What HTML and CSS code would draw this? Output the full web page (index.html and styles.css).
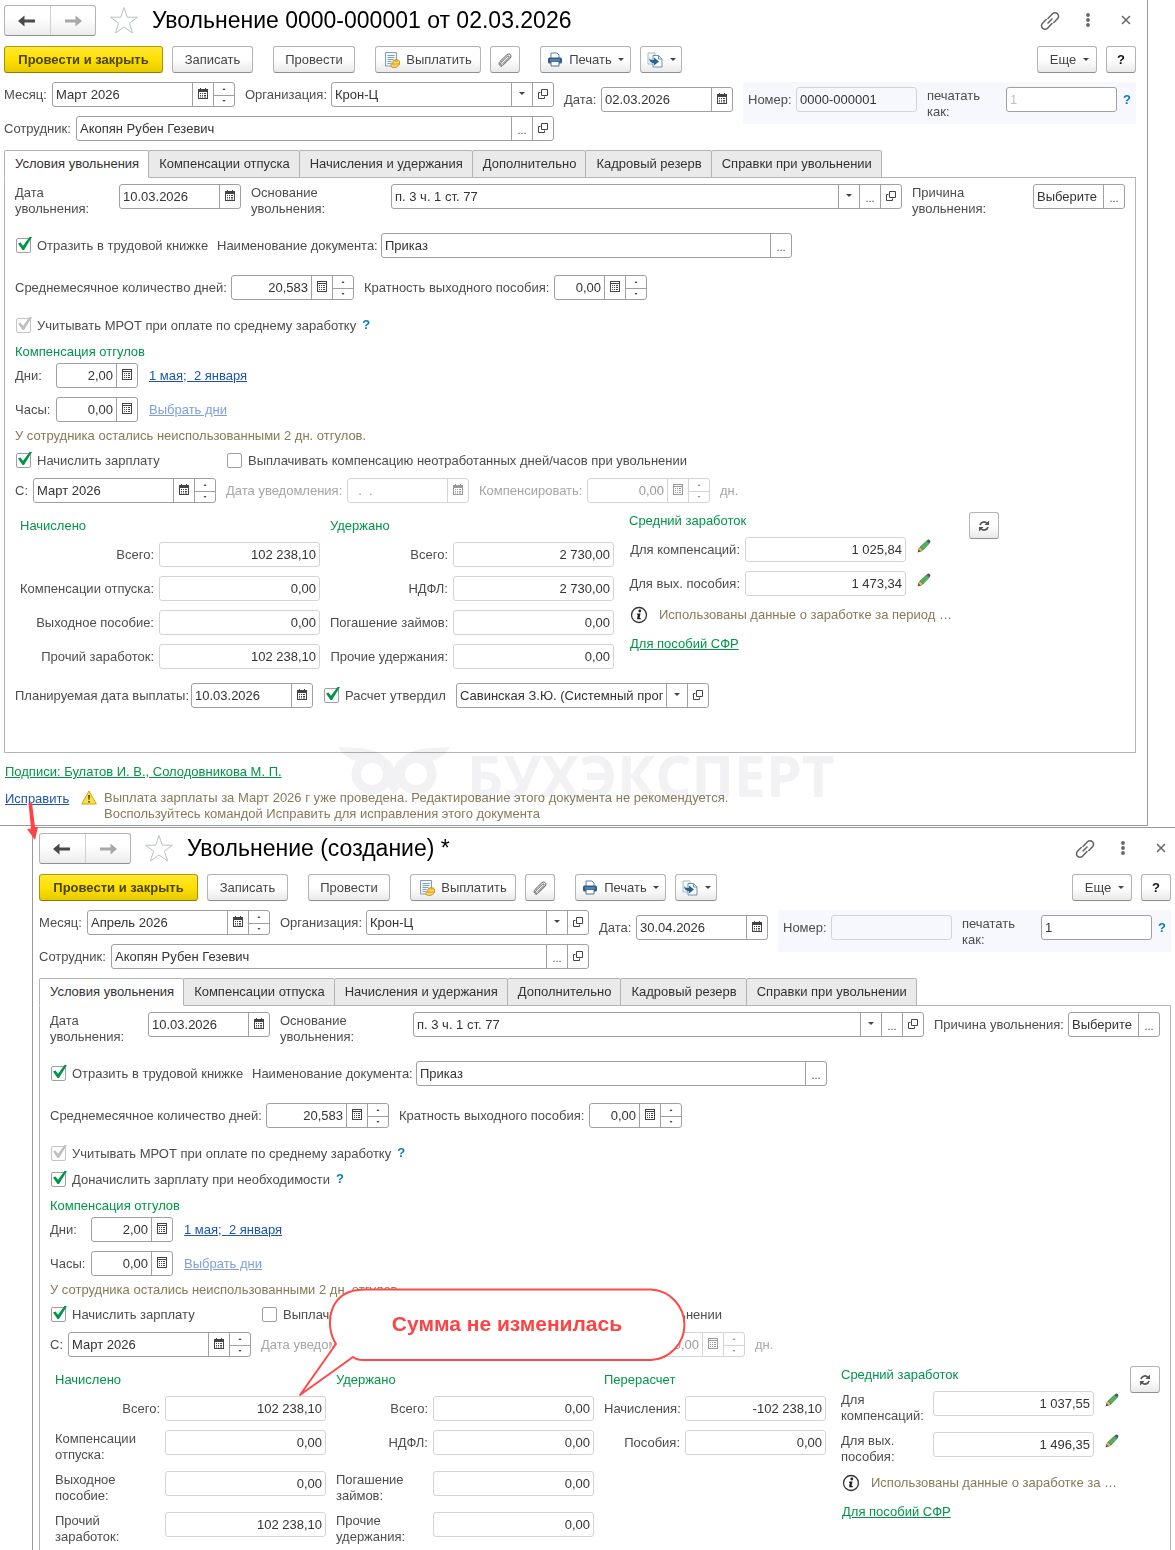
FILE: index.html
```html
<!DOCTYPE html>
<html lang="ru">
<head>
<meta charset="utf-8">
<title>Увольнение</title>
<meta name="viewport" content="width=device-width, initial-scale=1">
<link rel="stylesheet" href="styles.css">
</head>
<body>
<svg class="sprite" aria-hidden="true">
  <symbol id="i-back" viewBox="0 0 18 12"><path d="M0 6 6.500 0.500 6.500 4.500 17 4.500 17 7.500 6.500 7.500 6.500 11.500Z" fill="currentColor"/></symbol>
  <symbol id="i-forward" viewBox="0 0 18 12"><path d="M18 6 11.500 0.500 11.500 4.500 1 4.500 1 7.500 11.500 7.500 11.500 11.500Z" fill="currentColor"/></symbol>
  <symbol id="i-star" viewBox="0 0 30 29"><path d="M15 1.500 18.300 11.200 28.500 11.200 20.300 17.200 23.600 27 15 21 6.400 27 9.700 17.200 1.500 11.200 11.700 11.200Z" fill="#fff" stroke="#b9c0c6" stroke-width="1"/></symbol>
  <symbol id="i-link" viewBox="0 0 20 20"><g fill="none" stroke="#666" stroke-width="1.600" stroke-linecap="round"><path d="M8 7.500 12.500 2.800a3.500 3.500 0 0 1 5 5l-3.700 3.700"/><path d="M12 12.500 7.500 17.200a3.500 3.500 0 0 1-5-5l3.700-3.700"/><path d="M8 12 12 8"/></g></symbol>
  <symbol id="i-dots" viewBox="0 0 4 14"><g fill="#666"><circle cx="2" cy="2" r="1.900"/><circle cx="2" cy="7" r="1.900"/><circle cx="2" cy="12" r="1.900"/></g></symbol>
  <symbol id="i-close" viewBox="0 0 10 10"><path d="M1 1 9 9M9 1 1 9" stroke="#666" stroke-width="1.500"/></symbol>
  <symbol id="i-pay" viewBox="0 0 16 16"><path d="M1.500.500h11v13.500h-11z" fill="#f4f8fb" stroke="#7f9cb2"/><path d="M3.500 3.500h7M3.500 5.500h7M3.500 7.500h6M3.500 9.500h4M3.500 11.500h3" stroke="#7c9db5"/><path d="M9 9.500c0-2.400 6.500-2.400 6.500 0v2.500c0 1-1 1.500-1.500 1.500 0 2.500-7 3-7 .5v-1.500c0-1.500 1-1.700 2-1.700z" fill="#f3b52d" stroke="#b87f14" stroke-width=".7"/><path d="M9.500 10c1.500.8 4 .8 5.500 0M7.500 13.500c1.500 1 4.500.8 6-.3" fill="none" stroke="#fff0a0" stroke-width=".9"/></symbol>
  <symbol id="i-clip" viewBox="0 0 14 14"><path d="M5 10.500 10.800 4.700c.9-1.100-.4-2.300-1.400-1.400L3 9.500c-1.300 1.900.7 3.700 2.500 2.300L12.300 5c2-2.500-1-5.300-3.400-3.300L2 8.500C.2 11 1.500 13 3.500 13.300" fill="none" stroke="#555" stroke-width="1" stroke-linecap="round"/></symbol>
  <symbol id="i-print" viewBox="0 0 16 15"><path d="M4 6V1h6l2 2v3" fill="#fff" stroke="#5b82a6"/><rect x="1" y="5.500" width="14" height="6" rx="1.500" fill="#2f5f8c"/><path d="M3 8h10" stroke="#7ea6c8"/><path d="M4 9.500h8v4.500H4z" fill="#fff" stroke="#4b7196"/></symbol>
  <symbol id="i-copy" viewBox="0 0 16 16"><path d="M1 1h7v11H1z" fill="#f4f8fb" stroke="#a9b9c6"/><path d="M6 3.500h5.500L15 7v8H6z" fill="#fff" stroke="#6b90ad"/><path d="M11.500 3.500V7H15" fill="none" stroke="#6b90ad"/><path d="M2 4c0 3 1 4 5 4V5.500l5 4-5 4V11C3.500 11 2 9 2 4z" fill="#24638f"/></symbol>
  <symbol id="i-cal" viewBox="0 0 10 11"><path d="M0 1h2V0h1v1h4V0h1v1h2v10H0z" fill="currentColor"/><path d="M1 4h8v6H1z" fill="#fff"/><path d="M2 5h1v1H2zM4 5h1v1H4zM6 5h2v1H6zM2 7h1v1H2zM4 7h1v1H4zM6 7h2v1H6zM2 8.500h1v1H2zM4 8.500h1v1H4zM6 8.500h2v1H6z" fill="currentColor"/></symbol>
  <symbol id="i-calc" viewBox="0 0 10 11"><path d="M0 0h10v11H0z" fill="currentColor"/><path d="M1 1h8v1H1zM1 3h8v7H1z" fill="#fff"/><path d="M2 4h1v1H2zM4 4h1v1H4zM6 4h2v1H6zM2 6h1v1H2zM4 6h1v1H4zM6 6h2v1H6zM2 8h1v1H2zM4 8h1v1H4zM6 8h2v1H6z" fill="currentColor"/></symbol>
  <symbol id="i-open" viewBox="0 0 10 10"><path d="M3.500.500h6v6h-6zM2.500 3.500h-2v6h6v-2" fill="none" stroke="currentColor" stroke-width="1"/></symbol>
  <symbol id="i-down" viewBox="0 0 6 3"><path d="M0 0h6L3 3z" fill="currentColor"/></symbol>
  <symbol id="i-inc" viewBox="0 0 4 2"><path d="M.500 2h3L2 0z" fill="currentColor"/></symbol>
  <symbol id="i-dec" viewBox="0 0 4 2"><path d="M.500 0h3L2 2z" fill="currentColor"/></symbol>
  <symbol id="i-pencil" viewBox="0 0 14 14"><path d="M0.500 13.500 2 9.300 4.700 12z" fill="#4c4637"/><path d="M1.500 10.500 3 8l3 3-2.500 1.500z" fill="#edb45c" stroke="#75602f" stroke-width=".5"/><path d="M3 8 9.500 2l2.600 2.600L6 11z" fill="#4fb357" stroke="#3c7041" stroke-width=".6"/><path d="M9.500 2 11 .6c1-.5 2.800 1 2.300 2.300L12.100 4.600z" fill="#43566a"/></symbol>
  <symbol id="i-info" viewBox="0 0 18 18"><circle cx="9" cy="9" r="7.500" fill="#fff" stroke="#333" stroke-width="1.300"/><circle cx="9.800" cy="5" r="1.400" fill="#222"/><path d="M7 7.500h3.500L9.600 12h1.200v1.300H7l.8-4.500H7z" fill="#222"/></symbol>
  <symbol id="i-refresh" viewBox="0 0 12 12"><path d="M2 5a4 4 0 0 1 7-1.500M10 7a4 4 0 0 1-7 1.500" fill="none" stroke="#555" stroke-width="1.700"/><path d="M11 .500V5H6.500zM1 11.500V7h4.500z" fill="#555"/></symbol>
  <symbol id="i-warn" viewBox="0 0 16 15"><path d="M8 1 15.300 14H.7z" fill="#ffdf3a" stroke="#c4a32a" stroke-linejoin="round"/><path d="M7.200 5h1.700l-.3 4.800H7.500zM7.200 11h1.600v1.600H7.200z" fill="#333"/></symbol>
</svg>

<main class="desktop">
  <!-- Исходный документ -->
  <section class="window window--source">
    <header class="titlebar">
      <div class="nav">
        <button type="button" class="nav__btn" aria-label="Назад"><svg width="18" height="12"><use href="#i-back"/></svg></button>
        <button type="button" class="nav__btn nav__btn--off" aria-label="Вперед"><svg width="18" height="12"><use href="#i-forward"/></svg></button>
      </div>
      <button type="button" class="plain star" aria-label="В избранное"><svg width="30" height="29"><use href="#i-star"/></svg></button>
      <h1 class="title">Увольнение 0000-000001 от 02.03.2026</h1>
      <button type="button" class="plain" aria-label="Ссылка"><svg width="20" height="20"><use href="#i-link"/></svg></button>
      <button type="button" class="plain" aria-label="Меню"><svg width="4" height="14"><use href="#i-dots"/></svg></button>
      <button type="button" class="plain" aria-label="Закрыть"><svg width="10" height="10"><use href="#i-close"/></svg></button>
    </header>
    <div class="toolbar">
      <button type="button" class="btn btn--main">Провести и закрыть</button>
      <button type="button" class="btn btn--save">Записать</button>
      <button type="button" class="btn btn--post">Провести</button>
      <button type="button" class="btn btn--pay"><svg width="16" height="16"><use href="#i-pay"/></svg>Выплатить</button>
      <button type="button" class="btn btn--icon" aria-label="Файлы"><svg width="14" height="14"><use href="#i-clip"/></svg></button>
      <button type="button" class="btn btn--print"><svg width="16" height="15"><use href="#i-print"/></svg>Печать<svg width="6" height="3"><use href="#i-down"/></svg></button>
      <button type="button" class="btn btn--copy" aria-label="Создать на основании"><svg width="16" height="16"><use href="#i-copy"/></svg><svg width="6" height="3"><use href="#i-down"/></svg></button>
      <button type="button" class="btn btn--more">Еще<svg width="6" height="3"><use href="#i-down"/></svg></button>
      <button type="button" class="btn btn--icon btn--help">?</button>
    </div>
    <div class="head">
      <div class="head__main">
        <div class="row row--month">
          <label class="label" for="a-month">Месяц:</label>
          <div class="field"><input id="a-month" value="Март 2026"><button type="button" class="cell" aria-label="Календарь"><svg width="10" height="11"><use href="#i-cal"/></svg></button><span class="cell spin"><button type="button" aria-label="Больше"><svg width="4" height="2"><use href="#i-inc"/></svg></button><button type="button" aria-label="Меньше"><svg width="4" height="2"><use href="#i-dec"/></svg></button></span></div>
          <label class="label label--next" for="a-org">Организация:</label>
          <div class="field"><input id="a-org" value="Крон-Ц"><button type="button" class="cell" aria-label="Список"><svg width="6" height="3"><use href="#i-down"/></svg></button><button type="button" class="cell" aria-label="Открыть"><svg width="10" height="10"><use href="#i-open"/></svg></button></div>
        </div>
        <div class="row row--employee">
          <label class="label" for="a-emp">Сотрудник:</label>
          <div class="field"><input id="a-emp" value="Акопян Рубен Гезевич"><button type="button" class="cell cell--dots">...</button><button type="button" class="cell" aria-label="Открыть"><svg width="10" height="10"><use href="#i-open"/></svg></button></div>
        </div>
      </div>
      <div class="row row--date">
        <label class="label label--next" for="a-date">Дата:</label>
        <div class="field"><input id="a-date" value="02.03.2026"><button type="button" class="cell" aria-label="Календарь"><svg width="10" height="11"><use href="#i-cal"/></svg></button></div>
      </div>
      <div class="row row--number">
        <label class="label" for="a-num">Номер:</label>
        <div class="field field--readonly"><input id="a-num" value="0000-000001" readonly></div>
        <label class="label label--two label--next" for="a-print">печатать<br>как:</label>
        <div class="field"><input id="a-print" placeholder="1"></div>
        <a class="help" href="#">?</a>
      </div>
    </div>
    <nav class="tabs">
      <button type="button" class="tab tab--active">Условия увольнения</button><button type="button" class="tab">Компенсации отпуска</button><button type="button" class="tab">Начисления и удержания</button><button type="button" class="tab">Дополнительно</button><button type="button" class="tab">Кадровый резерв</button><button type="button" class="tab">Справки при увольнении</button>
    </nav>
    <div class="panel">
      <div class="row row--reason">
        <label class="label label--two" for="a-fire">Дата<br>увольнения:</label>
        <div class="field"><input id="a-fire" value="10.03.2026"><button type="button" class="cell" aria-label="Календарь"><svg width="10" height="11"><use href="#i-cal"/></svg></button></div>
        <label class="label label--two label--next" for="a-basis">Основание<br>увольнения:</label>
        <div class="field"><input id="a-basis" value="п. 3 ч. 1 ст. 77"><button type="button" class="cell" aria-label="Список"><svg width="6" height="3"><use href="#i-down"/></svg></button><button type="button" class="cell cell--dots">...</button><button type="button" class="cell" aria-label="Открыть"><svg width="10" height="10"><use href="#i-open"/></svg></button></div>
        <label class="label label--two label--next" for="a-cause">Причина<br>увольнения:</label>
        <div class="field"><input id="a-cause" value="Выберите"><button type="button" class="cell cell--dots">...</button></div>
      </div>
      <div class="row row--book">
        <label class="check"><input type="checkbox" checked>Отразить в трудовой книжке</label>
        <label class="label" for="a-doc">Наименование документа:</label>
        <div class="field"><input id="a-doc" value="Приказ"><button type="button" class="cell cell--dots">...</button></div>
      </div>
      <div class="row row--days">
        <label class="label" for="a-avgdays">Среднемесячное количество дней:</label>
        <div class="field field--num"><input id="a-avgdays" value="20,583"><button type="button" class="cell" aria-label="Калькулятор"><svg width="10" height="11"><use href="#i-calc"/></svg></button><span class="cell spin"><button type="button" aria-label="Больше"><svg width="4" height="2"><use href="#i-inc"/></svg></button><button type="button" aria-label="Меньше"><svg width="4" height="2"><use href="#i-dec"/></svg></button></span></div>
        <label class="label label--next" for="a-mult">Кратность выходного пособия:</label>
        <div class="field field--num"><input id="a-mult" value="0,00"><button type="button" class="cell" aria-label="Калькулятор"><svg width="10" height="11"><use href="#i-calc"/></svg></button><span class="cell spin"><button type="button" aria-label="Больше"><svg width="4" height="2"><use href="#i-inc"/></svg></button><button type="button" aria-label="Меньше"><svg width="4" height="2"><use href="#i-dec"/></svg></button></span></div>
      </div>
      <div class="checkline checkline--first">
        <label class="check"><input type="checkbox" checked disabled>Учитывать МРОТ при оплате по среднему заработку</label><a class="help" href="#">?</a>
      </div>
      <h2 class="section">Компенсация отгулов</h2>
      <div class="row row--off">
        <label class="label" for="a-offd">Дни:</label>
        <div class="field field--num"><input id="a-offd" value="2,00"><button type="button" class="cell" aria-label="Калькулятор"><svg width="10" height="11"><use href="#i-calc"/></svg></button></div>
        <a class="link" href="#">1 мая;&nbsp; 2 января</a>
      </div>
      <div class="row row--off">
        <label class="label" for="a-offh">Часы:</label>
        <div class="field field--num"><input id="a-offh" value="0,00"><button type="button" class="cell" aria-label="Калькулятор"><svg width="10" height="11"><use href="#i-calc"/></svg></button></div>
        <a class="link link--off" href="#">Выбрать дни</a>
      </div>
      <p class="hint hint--off">У сотрудника остались неиспользованными 2 дн. отгулов.</p>
      <div class="row row--salary">
        <label class="check"><input type="checkbox" checked>Начислить зарплату</label>
        <label class="check"><input type="checkbox">Выплачивать компенсацию неотработанных дней/часов при увольнении</label>
      </div>
      <div class="row row--from">
        <label class="label" for="a-from">С:</label>
        <div class="field"><input id="a-from" value="Март 2026"><button type="button" class="cell" aria-label="Календарь"><svg width="10" height="11"><use href="#i-cal"/></svg></button><span class="cell spin"><button type="button" aria-label="Больше"><svg width="4" height="2"><use href="#i-inc"/></svg></button><button type="button" aria-label="Меньше"><svg width="4" height="2"><use href="#i-dec"/></svg></button></span></div>
        <label class="label label--next label--off" for="a-notice">Дата уведомления:</label>
        <div class="field field--off"><input id="a-notice" value="  .  ." disabled><button type="button" class="cell" aria-label="Календарь" disabled><svg width="10" height="11"><use href="#i-cal"/></svg></button></div>
        <label class="label label--next label--off" for="a-comp">Компенсировать:</label>
        <div class="field field--num field--off"><input id="a-comp" value="0,00" disabled><button type="button" class="cell" aria-label="Калькулятор" disabled><svg width="10" height="11"><use href="#i-calc"/></svg></button><span class="cell spin"><button type="button" aria-label="Больше" disabled><svg width="4" height="2"><use href="#i-inc"/></svg></button><button type="button" aria-label="Меньше" disabled><svg width="4" height="2"><use href="#i-dec"/></svg></button></span></div>
        <span class="label label--next label--off">дн.</span>
      </div>
      <div class="totals">
        <div class="sum sum--accrued">
          <h2 class="section">Начислено</h2>
          <label class="label" for="a-s1">Всего:</label><div class="field field--num field--readonly"><input id="a-s1" value="102 238,10" readonly></div>
          <label class="label" for="a-s2">Компенсации отпуска:</label><div class="field field--num field--readonly"><input id="a-s2" value="0,00" readonly></div>
          <label class="label" for="a-s3">Выходное пособие:</label><div class="field field--num field--readonly"><input id="a-s3" value="0,00" readonly></div>
          <label class="label" for="a-s4">Прочий заработок:</label><div class="field field--num field--readonly"><input id="a-s4" value="102 238,10" readonly></div>
        </div>
        <div class="sum sum--held">
          <h2 class="section">Удержано</h2>
          <label class="label" for="a-h1">Всего:</label><div class="field field--num field--readonly"><input id="a-h1" value="2 730,00" readonly></div>
          <label class="label" for="a-h2">НДФЛ:</label><div class="field field--num field--readonly"><input id="a-h2" value="2 730,00" readonly></div>
          <label class="label" for="a-h3">Погашение займов:</label><div class="field field--num field--readonly"><input id="a-h3" value="0,00" readonly></div>
          <label class="label" for="a-h4">Прочие удержания:</label><div class="field field--num field--readonly"><input id="a-h4" value="0,00" readonly></div>
        </div>
        <div class="average">
          <div class="sum sum--average">
            <h2 class="section">Средний заработок</h2>
            <label class="label" for="a-v1">Для компенсаций:</label><div class="field field--num field--readonly"><input id="a-v1" value="1 025,84" readonly></div><button type="button" class="plain edit" aria-label="Изменить"><svg width="14" height="14"><use href="#i-pencil"/></svg></button>
            <label class="label" for="a-v2">Для вых. пособия:</label><div class="field field--num field--readonly"><input id="a-v2" value="1 473,34" readonly></div><button type="button" class="plain edit" aria-label="Изменить"><svg width="14" height="14"><use href="#i-pencil"/></svg></button>
          </div>
          <p class="hint info"><svg width="18" height="18"><use href="#i-info"/></svg>Использованы данные о заработке за период …</p>
          <a class="link link--green" href="#">Для пособий СФР</a>
        </div>
        <button type="button" class="btn btn--icon" aria-label="Обновить"><svg width="12" height="12"><use href="#i-refresh"/></svg></button>
      </div>
      <div class="row row--payout">
        <label class="label" for="a-pay">Планируемая дата выплаты:</label>
        <div class="field"><input id="a-pay" value="10.03.2026"><button type="button" class="cell" aria-label="Календарь"><svg width="10" height="11"><use href="#i-cal"/></svg></button></div>
        <label class="check label--next"><input type="checkbox" checked>Расчет утвердил</label>
        <div class="field"><input aria-label="Расчет утвердил" value="Савинская З.Ю. (Системный программист)"><button type="button" class="cell" aria-label="Список"><svg width="6" height="3"><use href="#i-down"/></svg></button><button type="button" class="cell" aria-label="Открыть"><svg width="10" height="10"><use href="#i-open"/></svg></button></div>
      </div>
    </div>
    <footer class="foot">
      <a class="link link--green" href="#">Подписи: Булатов И. В., Солодовникова М. П.</a>
      <div class="foot__fix">
        <a class="link" href="#">Исправить</a>
        <svg width="16" height="15"><use href="#i-warn"/></svg>
        <p class="hint">Выплата зарплаты за Март 2026 г уже проведена. Редактирование этого документа не рекомендуется.<br>Воспользуйтесь командой Исправить для исправления этого документа</p>
      </div>
      <div class="watermark">
        <svg width="112" height="50" viewBox="0 0 112 50" aria-hidden="true"><path d="M0 0C12 1 25 0 36 4 45 7 52 13 56 21 60 13 67 7 76 4 87 0 100 1 112 0 107 8 101 12 93 14L97 27 78 45 62 40 56 48 50 40 34 45 15 27 19 14C11 12 5 8 0 0Z" fill="currentColor"/><circle cx="34" cy="27" r="20.500" fill="currentColor"/><circle cx="78" cy="27" r="20.500" fill="currentColor"/><circle cx="34" cy="27" r="11" fill="#fff"/><circle cx="78" cy="27" r="11" fill="#fff"/></svg>
        <span>БУХЭКСПЕРТ</span>
      </div>
      <svg class="arrow" width="14" height="38" viewBox="0 0 14 38" aria-hidden="true"><path d="M4.500 0 8 0 11 24 14 24 11 37 3 26 7 25.500z" fill="#ff4343"/></svg>
    </footer>
  </section>

  <!-- Исправление -->
  <section class="window window--fix">
    <header class="titlebar">
      <div class="nav">
        <button type="button" class="nav__btn" aria-label="Назад"><svg width="18" height="12"><use href="#i-back"/></svg></button>
        <button type="button" class="nav__btn nav__btn--off" aria-label="Вперед"><svg width="18" height="12"><use href="#i-forward"/></svg></button>
      </div>
      <button type="button" class="plain star" aria-label="В избранное"><svg width="30" height="29"><use href="#i-star"/></svg></button>
      <h1 class="title">Увольнение (создание) *</h1>
      <button type="button" class="plain" aria-label="Ссылка"><svg width="20" height="20"><use href="#i-link"/></svg></button>
      <button type="button" class="plain" aria-label="Меню"><svg width="4" height="14"><use href="#i-dots"/></svg></button>
      <button type="button" class="plain" aria-label="Закрыть"><svg width="10" height="10"><use href="#i-close"/></svg></button>
    </header>
    <div class="toolbar">
      <button type="button" class="btn btn--main">Провести и закрыть</button>
      <button type="button" class="btn btn--save">Записать</button>
      <button type="button" class="btn btn--post">Провести</button>
      <button type="button" class="btn btn--pay"><svg width="16" height="16"><use href="#i-pay"/></svg>Выплатить</button>
      <button type="button" class="btn btn--icon" aria-label="Файлы"><svg width="14" height="14"><use href="#i-clip"/></svg></button>
      <button type="button" class="btn btn--print"><svg width="16" height="15"><use href="#i-print"/></svg>Печать<svg width="6" height="3"><use href="#i-down"/></svg></button>
      <button type="button" class="btn btn--copy" aria-label="Создать на основании"><svg width="16" height="16"><use href="#i-copy"/></svg><svg width="6" height="3"><use href="#i-down"/></svg></button>
      <button type="button" class="btn btn--more">Еще<svg width="6" height="3"><use href="#i-down"/></svg></button>
      <button type="button" class="btn btn--icon btn--help">?</button>
    </div>
    <div class="head">
      <div class="head__main">
        <div class="row row--month">
          <label class="label" for="b-month">Месяц:</label>
          <div class="field"><input id="b-month" value="Апрель 2026"><button type="button" class="cell" aria-label="Календарь"><svg width="10" height="11"><use href="#i-cal"/></svg></button><span class="cell spin"><button type="button" aria-label="Больше"><svg width="4" height="2"><use href="#i-inc"/></svg></button><button type="button" aria-label="Меньше"><svg width="4" height="2"><use href="#i-dec"/></svg></button></span></div>
          <label class="label label--next" for="b-org">Организация:</label>
          <div class="field"><input id="b-org" value="Крон-Ц"><button type="button" class="cell" aria-label="Список"><svg width="6" height="3"><use href="#i-down"/></svg></button><button type="button" class="cell" aria-label="Открыть"><svg width="10" height="10"><use href="#i-open"/></svg></button></div>
        </div>
        <div class="row row--employee">
          <label class="label" for="b-emp">Сотрудник:</label>
          <div class="field"><input id="b-emp" value="Акопян Рубен Гезевич"><button type="button" class="cell cell--dots">...</button><button type="button" class="cell" aria-label="Открыть"><svg width="10" height="10"><use href="#i-open"/></svg></button></div>
        </div>
      </div>
      <div class="row row--date">
        <label class="label label--next" for="b-date">Дата:</label>
        <div class="field"><input id="b-date" value="30.04.2026"><button type="button" class="cell" aria-label="Календарь"><svg width="10" height="11"><use href="#i-cal"/></svg></button></div>
      </div>
      <div class="row row--number">
        <label class="label" for="b-num">Номер:</label>
        <div class="field field--readonly"><input id="b-num" readonly></div>
        <label class="label label--two label--next" for="b-print">печатать<br>как:</label>
        <div class="field"><input id="b-print" value="1"></div>
        <a class="help" href="#">?</a>
      </div>
    </div>
    <nav class="tabs">
      <button type="button" class="tab tab--active">Условия увольнения</button><button type="button" class="tab">Компенсации отпуска</button><button type="button" class="tab">Начисления и удержания</button><button type="button" class="tab">Дополнительно</button><button type="button" class="tab">Кадровый резерв</button><button type="button" class="tab">Справки при увольнении</button>
    </nav>
    <div class="panel">
      <div class="row row--reason">
        <label class="label label--two" for="b-fire">Дата<br>увольнения:</label>
        <div class="field"><input id="b-fire" value="10.03.2026"><button type="button" class="cell" aria-label="Календарь"><svg width="10" height="11"><use href="#i-cal"/></svg></button></div>
        <label class="label label--two label--next" for="b-basis">Основание<br>увольнения:</label>
        <div class="field"><input id="b-basis" value="п. 3 ч. 1 ст. 77"><button type="button" class="cell" aria-label="Список"><svg width="6" height="3"><use href="#i-down"/></svg></button><button type="button" class="cell cell--dots">...</button><button type="button" class="cell" aria-label="Открыть"><svg width="10" height="10"><use href="#i-open"/></svg></button></div>
        <label class="label label--next" for="b-cause">Причина увольнения:</label>
        <div class="field"><input id="b-cause" value="Выберите"><button type="button" class="cell cell--dots">...</button></div>
      </div>
      <div class="row row--book">
        <label class="check"><input type="checkbox" checked>Отразить в трудовой книжке</label>
        <label class="label" for="b-doc">Наименование документа:</label>
        <div class="field"><input id="b-doc" value="Приказ"><button type="button" class="cell cell--dots">...</button></div>
      </div>
      <div class="row row--days">
        <label class="label" for="b-avgdays">Среднемесячное количество дней:</label>
        <div class="field field--num"><input id="b-avgdays" value="20,583"><button type="button" class="cell" aria-label="Калькулятор"><svg width="10" height="11"><use href="#i-calc"/></svg></button><span class="cell spin"><button type="button" aria-label="Больше"><svg width="4" height="2"><use href="#i-inc"/></svg></button><button type="button" aria-label="Меньше"><svg width="4" height="2"><use href="#i-dec"/></svg></button></span></div>
        <label class="label label--next" for="b-mult">Кратность выходного пособия:</label>
        <div class="field field--num"><input id="b-mult" value="0,00"><button type="button" class="cell" aria-label="Калькулятор"><svg width="10" height="11"><use href="#i-calc"/></svg></button><span class="cell spin"><button type="button" aria-label="Больше"><svg width="4" height="2"><use href="#i-inc"/></svg></button><button type="button" aria-label="Меньше"><svg width="4" height="2"><use href="#i-dec"/></svg></button></span></div>
      </div>
      <div class="checkline checkline--first">
        <label class="check"><input type="checkbox" checked disabled>Учитывать МРОТ при оплате по среднему заработку</label><a class="help" href="#">?</a>
      </div>
      <div class="checkline">
        <label class="check"><input type="checkbox" checked>Доначислить зарплату при необходимости</label><a class="help" href="#">?</a>
      </div>
      <h2 class="section">Компенсация отгулов</h2>
      <div class="row row--off">
        <label class="label" for="b-offd">Дни:</label>
        <div class="field field--num"><input id="b-offd" value="2,00"><button type="button" class="cell" aria-label="Калькулятор"><svg width="10" height="11"><use href="#i-calc"/></svg></button></div>
        <a class="link" href="#">1 мая;&nbsp; 2 января</a>
      </div>
      <div class="row row--off">
        <label class="label" for="b-offh">Часы:</label>
        <div class="field field--num"><input id="b-offh" value="0,00"><button type="button" class="cell" aria-label="Калькулятор"><svg width="10" height="11"><use href="#i-calc"/></svg></button></div>
        <a class="link link--off" href="#">Выбрать дни</a>
      </div>
      <p class="hint hint--off">У сотрудника остались неиспользованными 2 дн. отгулов.</p>
      <div class="row row--salary">
        <label class="check"><input type="checkbox" checked>Начислить зарплату</label>
        <label class="check"><input type="checkbox">Выплачивать компенсацию неотработанных дней/часов при увольнении</label>
      </div>
      <div class="row row--from">
        <label class="label" for="b-from">С:</label>
        <div class="field"><input id="b-from" value="Март 2026"><button type="button" class="cell" aria-label="Календарь"><svg width="10" height="11"><use href="#i-cal"/></svg></button><span class="cell spin"><button type="button" aria-label="Больше"><svg width="4" height="2"><use href="#i-inc"/></svg></button><button type="button" aria-label="Меньше"><svg width="4" height="2"><use href="#i-dec"/></svg></button></span></div>
        <label class="label label--next label--off" for="b-notice">Дата уведомления:</label>
        <div class="field field--off"><input id="b-notice" value="  .  ." disabled><button type="button" class="cell" aria-label="Календарь" disabled><svg width="10" height="11"><use href="#i-cal"/></svg></button></div>
        <label class="label label--next label--off" for="b-comp">Компенсировать:</label>
        <div class="field field--num field--off"><input id="b-comp" value="0,00" disabled><button type="button" class="cell" aria-label="Калькулятор" disabled><svg width="10" height="11"><use href="#i-calc"/></svg></button><span class="cell spin"><button type="button" aria-label="Больше" disabled><svg width="4" height="2"><use href="#i-inc"/></svg></button><button type="button" aria-label="Меньше" disabled><svg width="4" height="2"><use href="#i-dec"/></svg></button></span></div>
        <span class="label label--next label--off">дн.</span>
      </div>
      <div class="totals">
        <div class="sum sum--accrued">
          <h2 class="section">Начислено</h2>
          <label class="label" for="b-s1">Всего:</label><div class="field field--num field--readonly"><input id="b-s1" value="102 238,10" readonly></div>
          <label class="label label--two" for="b-s2">Компенсации<br>отпуска:</label><div class="field field--num field--readonly"><input id="b-s2" value="0,00" readonly></div>
          <label class="label label--two" for="b-s3">Выходное<br>пособие:</label><div class="field field--num field--readonly"><input id="b-s3" value="0,00" readonly></div>
          <label class="label label--two" for="b-s4">Прочий<br>заработок:</label><div class="field field--num field--readonly"><input id="b-s4" value="102 238,10" readonly></div>
        </div>
        <div class="sum sum--held">
          <h2 class="section">Удержано</h2>
          <label class="label" for="b-h1">Всего:</label><div class="field field--num field--readonly"><input id="b-h1" value="0,00" readonly></div>
          <label class="label" for="b-h2">НДФЛ:</label><div class="field field--num field--readonly"><input id="b-h2" value="0,00" readonly></div>
          <label class="label label--two" for="b-h3">Погашение<br>займов:</label><div class="field field--num field--readonly"><input id="b-h3" value="0,00" readonly></div>
          <label class="label label--two" for="b-h4">Прочие<br>удержания:</label><div class="field field--num field--readonly"><input id="b-h4" value="0,00" readonly></div>
        </div>
        <div class="sum sum--recalc">
          <h2 class="section">Перерасчет</h2>
          <label class="label" for="b-r1">Начисления:</label><div class="field field--num field--readonly"><input id="b-r1" value="-102 238,10" readonly></div>
          <label class="label" for="b-r2">Пособия:</label><div class="field field--num field--readonly"><input id="b-r2" value="0,00" readonly></div>
        </div>
        <div class="average">
          <div class="sum sum--average">
            <h2 class="section">Средний заработок</h2>
            <label class="label label--two" for="b-v1">Для<br>компенсаций:</label><div class="field field--num field--readonly"><input id="b-v1" value="1 037,55" readonly></div><button type="button" class="plain edit" aria-label="Изменить"><svg width="14" height="14"><use href="#i-pencil"/></svg></button>
            <label class="label label--two" for="b-v2">Для вых.<br>пособия:</label><div class="field field--num field--readonly"><input id="b-v2" value="1 496,35" readonly></div><button type="button" class="plain edit" aria-label="Изменить"><svg width="14" height="14"><use href="#i-pencil"/></svg></button>
          </div>
          <p class="hint info"><svg width="18" height="18"><use href="#i-info"/></svg>Использованы данные о заработке за …</p>
          <a class="link link--green" href="#">Для пособий СФР</a>
        </div>
        <button type="button" class="btn btn--icon" aria-label="Обновить"><svg width="12" height="12"><use href="#i-refresh"/></svg></button>
      </div>
      <div class="callout">
        <svg width="396" height="112" viewBox="0 0 396 112" aria-hidden="true"><path d="M66 2.500H353a35.300 35.300 0 0 1 0 70.500H65Q59 73 55 70L2 108 38 57C26 38 30 3 66 2.500Z" fill="#fff" stroke="#ff4949" stroke-width="2" stroke-linejoin="round"/></svg>
        <strong>Сумма не изменилась</strong>
      </div>
    </div>
  </section>
</main>
</body>
</html>
```
FILE: styles.css
```css
* { box-sizing: border-box; }

:root {
  --text: #333;
  --label: #4d4d4d;
  --line: #a0a0a0;
  --line-soft: #d4d4d4;
  --green: #009646;
  --hint: #877a5a;
  --blue: #1c55ae;
}

body {
  margin: 0;
  background: #fff;
  color: var(--text);
  font: 13px/16px "Liberation Sans", Arial, sans-serif;
}

h1, h2, p { margin: 0; font-weight: normal; }
button, input { font: inherit; color: inherit; }
button { padding: 0; border: 0; background: none; }
svg { display: block; flex: none; }
.sprite { position: absolute; width: 0; height: 0; }

.desktop {
  display: flex;
  flex-direction: column;
  min-height: 100vh;
}

/* Windows */
.window { display: flex; flex-direction: column; }
.window--source {
  --reason: 104px 122px 150px 1fr 131px 92px;
  --accrued: 139px;
  --held: 123px;
  --average: 116px;
  margin-right: 27px;
  padding: 5px 11px 3px 4px;
  border: solid #999;
  border-width: 0 1px 1px 0;
}
.window--fix {
  --reason: 98px 122px 143px 1fr 144px 92px;
  --accrued: 110px;
  --held: 97px;
  --average: 92px;
  flex: 1;
  margin: 1px 0 0 32px;
  padding: 5px 4px 0 6px;
  border: solid #999;
  border-width: 1px 0 0 1px;
}

/* Title bar */
.titlebar { display: flex; align-items: center; gap: 18px; height: 31px; }
.nav {
  display: flex;
  width: 92px;
  height: 31px;
  border: 1px solid #b4b4b4;
  border-bottom-color: #8f8f8f;
  border-radius: 3px;
  background: linear-gradient(#fff 40%, #ececec);
}
.nav__btn { display: grid; flex: 1; place-items: center; color: #4a4a4a; }
.nav__btn--off { border-left: 1px solid #d0d0d0; color: #a8a8a8; }
.plain { display: grid; width: 20px; height: 20px; padding-bottom: 2px; place-items: center; }
.star { width: 30px; height: 29px; margin: 0 -5px 0 -5px; padding: 0; }
.title { flex: 1; padding-bottom: 2px; color: #000; font-size: 23px; line-height: 28px; white-space: nowrap; }

/* Toolbar */
.toolbar { display: flex; gap: 9px; margin-top: 10px; }
.btn {
  display: flex;
  align-items: center;
  justify-content: center;
  height: 27px;
  border: 1px solid #b4b4b4;
  border-bottom-color: #8f8f8f;
  border-radius: 3px;
  background: linear-gradient(#fff 50%, #e9e9e9);
  color: #444;
  white-space: nowrap;
}
.btn--main {
  width: 159px;
  border-color: #b39c00 #a89200 #8f7c00;
  background: linear-gradient(#ffe835, #ffe000 50%, #e6ca00);
  color: #4a4200;
  font-weight: bold;
}
.btn--save { width: 81px; }
.btn--post { width: 82px; margin: 0 11px; }
.btn--pay { width: 106px; gap: 6px; }
.btn--icon { width: 30px; }
.btn--print { width: 91px; margin-left: 11px; gap: 6px; }
.btn--copy { width: 42px; gap: 7px; }
.btn--more { width: 60px; margin-left: auto; padding-left: 5px; gap: 7px; }
.btn--help { color: #111; font-weight: bold; }

/* Fields */
.row { display: grid; align-items: start; }
.label {
  height: 25px;
  color: var(--label);
  line-height: 25px;
  white-space: nowrap;
}
.label--two { height: auto; margin-bottom: -1px; padding-top: 1px; line-height: 16px; }
.label--next { padding-left: 10px; }
.label--off { color: #a6a6a6; }
.field {
  display: flex;
  height: 25px;
  border: 1px solid var(--line);
  border-radius: 3px;
  background: #fff;
}
.field input {
  flex: 1;
  width: 0;
  min-width: 0;
  margin: 0 3px;
  padding: 0;
  border: 0;
  outline: 0;
  background: none;
}
.field input::placeholder { color: #c0c0c0; opacity: 1; }
.field--num input { text-align: right; }
.field--readonly { border-color: var(--line-soft); background: none; }
.field--off { border-color: var(--line-soft); color: #999; }
.field--off input { white-space: pre; }
.cell {
  display: grid;
  width: 21px;
  padding: 0 1px 2px 0;
  place-items: center;
  border-left: 1px solid var(--line);
  color: #444;
}
.cell--dots { padding: 2px 0 0; font-size: 11px; }
.spin { grid-template-rows: 1fr 1fr; padding: 0; place-items: stretch; }
.spin button { display: grid; place-items: center; }
.spin button + button { border-top: 1px solid var(--line); }
.field--off .cell, .field--off .spin button { border-color: var(--line-soft); color: #999; }

.help { padding-left: 6px; color: #0a7ac0; font-weight: bold; text-decoration: none; }
.link { color: var(--blue); text-decoration: underline; }
.link--off { color: #7f9fdc; }
.link--green { color: var(--green); }
.hint { color: var(--hint); }
.section { color: var(--green); font-size: 13px; line-height: 16px; }

.check { display: flex; align-items: center; height: 17px; color: var(--label); white-space: nowrap; }
.check input {
  position: relative;
  flex: none;
  width: 15px;
  height: 15px;
  margin: 0 6px 0 1px;
  border: 1px solid var(--line);
  border-radius: 2px;
  background: #fff;
  appearance: none;
}
.check input:checked::before {
  content: "";
  position: absolute;
  left: 1px;
  top: -2px;
  width: 14px;
  height: 13px;
  background: var(--green);
  clip-path: polygon(0 50%, 18% 43%, 36% 68%, 82% 0, 100% 0, 43% 100%, 32% 100%);
}
.check input:disabled { border-color: #c4c4c4; }
.check input:disabled::before { background: #c0c0c0; }

/* Document head */
.head { display: flex; align-items: flex-start; margin-top: 9px; }
.head__main { display: grid; width: 550px; gap: 9px; }
.row--month { grid-template-columns: 48px 183px 96px 1fr; }
.row--employee { grid-template-columns: 72px 1fr; }
.row--date { grid-template-columns: 47px 132px; margin-top: 5px; }
.row--number {
  flex: 1;
  grid-template-columns: 48px 121px 89px 111px 1fr;
  height: 42px;
  margin-left: 10px;
  padding: 5px 0 0 5px;
  background: #f7f8fe;
}
.row--number .help { line-height: 25px; }

/* Tabs */
.tabs { display: flex; margin-top: 9px; }
.tab {
  height: 28px;
  margin: 0 0 -1px -1px;
  padding: 0 9px 0 10px;
  border: 1px solid #b4b4b4;
  border-radius: 2px 2px 0 0;
  background: #eaeaea;
  white-space: nowrap;
}
.tab--active { position: relative; z-index: 1; margin-left: 0; border-bottom-color: #fff; background: #fff; }

.panel { position: relative; padding: 6px 10px 44px; border: 1px solid #b4b4b4; }
.window--fix .panel { flex: 1; padding-bottom: 8px; border-bottom: 0; }

.row--reason { grid-template-columns: var(--reason); }
.row--book { grid-template-columns: 202px 164px 411px; align-items: center; margin-top: 17px; }
.row--days { grid-template-columns: 216px 123px 200px 93px; margin-top: 17px; }
.checkline { display: flex; margin-top: 9px; }
.checkline--first { margin-top: 17px; }
.panel > .section { margin: 10px 0 3px; }
.row--off { grid-template-columns: 41px 82px 1fr; align-items: center; }
.row--off + .row--off { margin-top: 9px; }
.row--off .link { margin-left: 11px; }
.hint--off { margin-top: 6px; }
.row--salary { grid-template-columns: 211px auto; margin-top: 8px; }
.row--from { grid-template-columns: 18px 183px 131px 122px 118px 123px auto; margin-top: 9px; }
.row--payout { grid-template-columns: 176px 122px 143px 253px; align-items: center; margin-top: 14px; }

/* Totals */
.totals { display: flex; align-items: flex-start; gap: 10px; margin-top: 9px; padding-left: 5px; }
.sum { display: grid; align-items: start; row-gap: 9px; padding-top: 6px; }
.sum .section { grid-column: 1 / -1; margin-bottom: -1px; white-space: nowrap; }
.sum .label:not(.label--two) { padding-right: 5px; text-align: right; }
.sum--accrued { grid-template-columns: var(--accrued) 161px; }
.sum--held { grid-template-columns: var(--held) 161px; }
.window--fix .sum--held { grid-template-rows: auto auto 32px; }
.sum--recalc { grid-template-columns: 81px 141px; }
.sum--average { grid-template-columns: var(--average) 161px 14px; padding-top: 1px; }
.edit { width: 14px; height: 14px; margin: 2px 0 0 11px; padding: 0; }
.average { width: 330px; margin-left: 5px; }
.window--fix .average { flex: 1; width: auto; }
.average > .link { display: block; width: max-content; margin: 11px 0 0 1px; }
.info { display: flex; align-items: center; height: 20px; margin: 9px 0 0 1px; gap: 11px; white-space: nowrap; }

/* Footer */
.foot { position: relative; padding: 11px 0 0 1px; }
.foot > .link { display: block; width: max-content; }
.foot__fix { display: flex; align-items: flex-start; margin-top: 10px; gap: 7px; }
.foot__fix .link { width: 69px; line-height: 18px; }
.watermark {
  position: absolute;
  left: 334px;
  top: -6px;
  display: flex;
  gap: 17px;
  color: #f2f2f4;
  font: bold 57px/56px "Open Sans", sans-serif;
  mix-blend-mode: multiply;
  pointer-events: none;
}
.arrow { position: absolute; left: 20px; top: 50px; z-index: 1; }

/* Callout */
.callout { position: absolute; left: 258px; top: 281px; }
.callout strong {
  position: absolute;
  inset: 24px 0 auto 34px;
  width: 350px;
  color: #ff4343;
  font-size: 21px;
  line-height: 26px;
  text-align: center;
  white-space: nowrap;
}
```
